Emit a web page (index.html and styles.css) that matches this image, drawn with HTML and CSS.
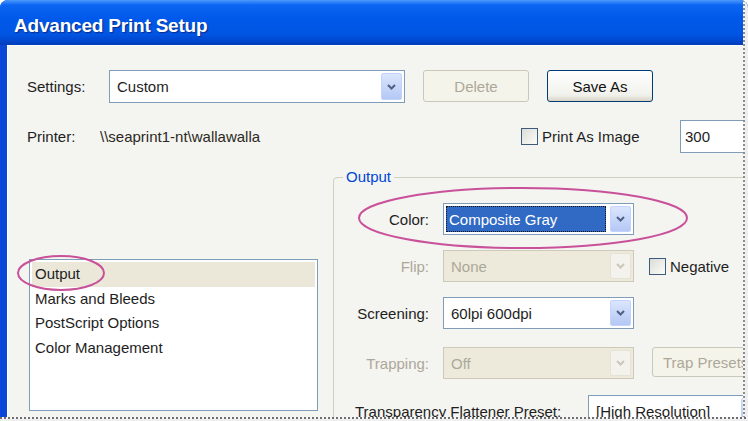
FILE: index.html
```html
<!DOCTYPE html>
<html lang="en">
<head>
    <meta charset="UTF-8">
    <meta name="viewport" content="width=device-width, initial-scale=1.0">
    <title>Advanced Print Setup</title>
    <link rel="stylesheet" href="styles.css">
</head>
<body>
    <div class="window">
        <div class="titlebar">Advanced Print Setup</div>
        <div class="frame">
            <div class="content">
                <!-- Settings -->
                <div class="row settings-row">
                    <span class="settings-label">Settings:</span>
                    <div class="combo settings-combo">
                        <span class="combo-text">Custom</span>
                        <span class="combo-arrow"><svg width="9" height="6" viewBox="0 0 9 6"><path d="M1 1l3.5 3.5L8 1" /></svg></span>
                    </div>
                    <button class="btn" disabled>Delete</button>
                    <button class="btn">Save As</button>
                </div>

                <!-- Printer -->
                <div class="row printer-row">
                    <span class="printer-label">Printer:</span>
                    <span class="printer-name">\\seaprint1-nt\wallawalla</span>
                    <label class="check print-image"><span class="box"></span>Print As Image</label>
                    <div class="textbox">300</div>
                </div>

                <div class="lower">
                    <ul class="listbox">
                        <li class="selected">Output</li>
                        <li>Marks and Bleeds</li>
                        <li>PostScript Options</li>
                        <li>Color Management</li>
                    </ul>

                    <fieldset class="group">
                        <legend>Output</legend>
                        <div class="fields">
                            <span class="field-label">Color:</span>
                            <div class="combo">
                                <span class="combo-text focused">Composite Gray</span>
                                <span class="combo-arrow"><svg width="9" height="6" viewBox="0 0 9 6"><path d="M1 1l3.5 3.5L8 1" /></svg></span>
                            </div>
                            <span></span>

                            <span class="field-label disabled">Flip:</span>
                            <div class="combo disabled">
                                <span class="combo-text">None</span>
                                <span class="combo-arrow"><svg width="9" height="6" viewBox="0 0 9 6"><path d="M1 1l3.5 3.5L8 1" /></svg></span>
                            </div>
                            <label class="check negative"><span class="box"></span>Negative</label>

                            <span class="field-label">Screening:</span>
                            <div class="combo">
                                <span class="combo-text">60lpi 600dpi</span>
                                <span class="combo-arrow"><svg width="9" height="6" viewBox="0 0 9 6"><path d="M1 1l3.5 3.5L8 1" /></svg></span>
                            </div>
                            <span></span>

                            <span class="field-label disabled">Trapping:</span>
                            <div class="combo disabled">
                                <span class="combo-text">Off</span>
                                <span class="combo-arrow"><svg width="9" height="6" viewBox="0 0 9 6"><path d="M1 1l3.5 3.5L8 1" /></svg></span>
                            </div>
                            <button class="btn trap-btn" disabled>Trap Presets</button>
                        </div>

                        <div class="flatten-row">
                            <span class="flatten-label">Transparency Flattener Preset:</span>
                            <div class="combo flatten-combo">
                                <span class="combo-text">[High Resolution]</span>
                                <span class="combo-arrow"><svg width="9" height="6" viewBox="0 0 9 6"><path d="M1 1l3.5 3.5L8 1" /></svg></span>
                            </div>
                        </div>
                    </fieldset>
                </div>
            </div>
        </div>

        <!-- annotation circles drawn over the screenshot -->
        <svg class="marks" width="748" height="421" viewBox="0 0 748 421">
            <ellipse cx="61" cy="273" rx="43" ry="17" />
            <ellipse cx="523" cy="218" rx="164" ry="30" />
        </svg>
        <div class="torn-right"></div>
        <div class="torn-bottom"></div>
    </div>
</body>
</html>
```

FILE: styles.css
```css
body {
    margin: 0;
    background: #fff;
    font-family: "Liberation Sans", Arial, sans-serif;
    font-size: 15px;
    color: #1e1e1e;
}
.window {
    position: relative;
    width: 748px;
    height: 421px;
    overflow: hidden;
    border-radius: 8px 8px 0 0;
    background: #0845d8;
}
.titlebar {
    height: 38px;
    padding: 7px 0 0 14px;
    display: flex;
    align-items: center;
    font-weight: bold;
    font-size: 19px;
    letter-spacing: -0.2px;
    color: #fff;
    text-shadow: 1px 1px 1px #0a2a8a;
    background: linear-gradient(to bottom, #4a98fc 0px, #0d66f2 5px, #0059ea 18px, #0055e3 34px, #0049d2 40px, #003cb8 45px);
}
.frame {
    border-left: 7px solid #0a47d6;
    height: 376px;
}
.content {
    height: 100%;
    background: #f4f4f1;
    padding: 25px 0 0 20px;
    box-sizing: border-box;
    box-shadow: inset 1px 1px 0 #ffffff;
}
.row {
    display: flex;
    align-items: center;
}
.row > * {
    flex-shrink: 0;
}
.settings-row {
    height: 33px;
}
.settings-label {
    width: 82px;
}
.printer-row {
    margin-top: 17px;
    height: 33px;
}
.printer-label {
    width: 73px;
}
.printer-name {
    width: 421px;
    color: #2b2922;
}

/* combo boxes */
.combo {
    box-sizing: border-box;
    width: 191px;
    height: 32px;
    border: 1px solid #7f9db9;
    background: #fff;
    display: flex;
    align-items: stretch;
    padding: 2px;
}
.settings-combo {
    width: 296px;
    height: 33px;
}
.combo-text {
    flex: 1;
    display: flex;
    align-items: center;
    padding-left: 5px;
    margin-right: 4px;
    white-space: nowrap;
    overflow: hidden;
}
.combo-text.focused {
    background: #316ac5;
    color: #fff;
    border: 1px dotted #111;
    padding-left: 2px;
}
.combo-arrow {
    width: 21px;
    box-sizing: border-box;
    border: 1px solid #c3d3fd;
    border-radius: 2px;
    background: linear-gradient(to bottom, #dbe5fd, #b4c8f5);
    display: flex;
    align-items: center;
    justify-content: center;
}
.combo-arrow path {
    fill: none;
    stroke: #4d6185;
    stroke-width: 2;
}
.combo.disabled {
    border-color: #cdcabb;
    background: #edeadb;
    color: #aca899;
}
.combo.disabled .combo-arrow {
    border-color: #e6e3d6;
    background: #f3f2ec;
}
.combo.disabled .combo-arrow path {
    stroke: #c9c7ba;
}

/* buttons */
.btn {
    font: inherit;
    box-sizing: border-box;
    width: 106px;
    height: 32px;
    margin-left: 18px;
    align-self: flex-start;
    border: 1px solid #003c74;
    border-radius: 3px;
    background: linear-gradient(to bottom, #ffffff, #f1f1ec 80%, #d8d3c6);
    color: #111;
    padding: 0;
}
.btn:disabled {
    border-color: #cac8bb;
    background: #f5f4ea;
    color: #aca899;
}

/* check boxes */
.check {
    display: flex;
    align-items: center;
    gap: 4px;
}
.check .box {
    width: 17px;
    height: 17px;
    box-sizing: border-box;
    border: 1px solid #3f5b7b;
    background: linear-gradient(135deg, #dcdcd7, #fbfbf8);
}
.print-image {
    width: 159px;
}
.textbox {
    box-sizing: border-box;
    width: 100px;
    height: 33px;
    border: 1px solid #7f9db9;
    background: #fff;
    padding-left: 4px;
    display: flex;
    align-items: center;
}

/* lower part */
.lower {
    display: flex;
    align-items: flex-start;
    margin-top: 15px;
}
.listbox {
    list-style: none;
    margin: 91px 0 0 2px;
    padding: 2px;
    width: 289px;
    height: 152px;
    box-sizing: border-box;
    border: 1px solid #7f9db9;
    background: #fff;
    flex-shrink: 0;
}
.listbox li {
    height: 24.5px;
    line-height: 24.5px;
    padding-left: 3px;
}
.listbox li.selected {
    background: #ebe8d9;
}
.group {
    margin: 0 0 0 15px;
    padding: 17px 0 0 0;
    width: 470px;
    min-width: 0;
    flex-shrink: 0;
    border: 1px solid #d0d0bf;
    border-radius: 4px;
}
.group legend {
    margin-left: 9px;
    padding: 0 3px;
    line-height: 18px;
    color: #0046d5;
}
.fields {
    display: grid;
    grid-template-columns: 95px 191px auto;
    grid-template-rows: 47px 47px 50px 32px;
    column-gap: 14px;
    align-items: start;
}
.field-label {
    height: 32px;
    display: flex;
    align-items: center;
    justify-content: flex-end;
}
.field-label.disabled {
    color: #aca899;
}
.negative {
    height: 32px;
    margin-left: 1px;
}
.trap-btn {
    width: 120px;
    height: 30px;
    margin-left: 4px;
    text-align: left;
    padding-left: 10px;
}
.flatten-row {
    display: flex;
    margin-top: 16px;
    padding-left: 21px;
}
.flatten-label {
    width: 233px;
    height: 32px;
    display: flex;
    align-items: center;
    flex-shrink: 0;
}
.flatten-combo {
    width: 177px;
    flex-shrink: 0;
}

/* overlays */
.marks {
    position: absolute;
    left: 0;
    top: 0;
    pointer-events: none;
}
.marks ellipse {
    fill: none;
    stroke: #c9519a;
    stroke-width: 2;
}
.torn-right {
    position: absolute;
    top: 0;
    right: 0;
    width: 5px;
    height: 421px;
    background: repeating-linear-gradient(to bottom, #8c8c8c 0 2px, #f6f6f6 2px 4px) left / 2px 100% no-repeat, #eeeeee;
}
.torn-bottom {
    position: absolute;
    left: 0;
    bottom: 0;
    width: 748px;
    height: 4px;
    background: repeating-linear-gradient(to right, #6e6e6e 0 2px, #f6f6f6 2px 4px) top / 100% 2px no-repeat, #eeeeee;
}
```
